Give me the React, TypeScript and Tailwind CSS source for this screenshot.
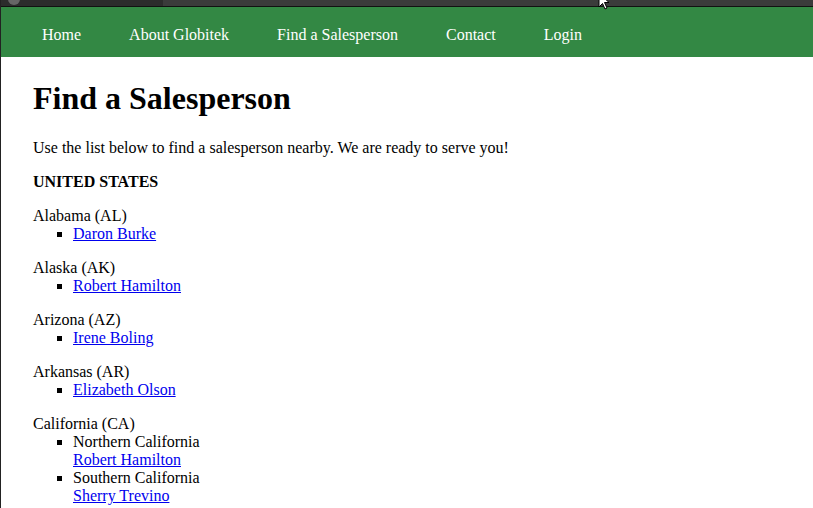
const navItems = ['Home', 'About Globitek', 'Find a Salesperson', 'Contact', 'Login'];

type Region = {
  name: string;
  people?: string[];
  areas?: { area: string; person: string }[];
};

const regions: Region[] = [
  { name: 'Alabama (AL)', people: ['Daron Burke'] },
  { name: 'Alaska (AK)', people: ['Robert Hamilton'] },
  { name: 'Arizona (AZ)', people: ['Irene Boling'] },
  { name: 'Arkansas (AR)', people: ['Elizabeth Olson'] },
  {
    name: 'California (CA)',
    areas: [
      { area: 'Northern California', person: 'Robert Hamilton' },
      { area: 'Southern California', person: 'Sherry Trevino' },
    ],
  },
];

function Link({ children }: { children: string }) {
  return (
    <a href="#" className="text-[#0000ee] underline">
      {children}
    </a>
  );
}

export default function App() {
  return (
    <div className="relative w-[813px] h-[508px] overflow-hidden bg-white border-l border-[#222] font-['Liberation_Serif',serif] text-[16px] leading-[18px] text-black">
      {/* browser chrome strip */}
      <div className="relative flex h-[7px] bg-[#2c2c2c] border-b border-[#111]">
        <div className="absolute left-[7px] top-[-7px] w-[12px] h-[12px] rounded-full bg-[#666]" />
        <div className="ml-[162px] flex-1 bg-[#3b3b3b]" />
      </div>
      <svg className="absolute left-[597px] top-[-8px]" width="12" height="18" viewBox="0 0 12 18">
        <path d="M1 1 L1 15 L4.5 11.5 L7 17 L9 16 L6.5 10.5 L11 10.5 Z" fill="#fff" stroke="#000" strokeWidth="1" />
      </svg>

      <nav className="flex items-center h-[50px] bg-[#338844] pl-[17px] pt-[6px]">
        {navItems.map((item) => (
          <a key={item} href="#" className="px-[24px] text-white">
            {item}
          </a>
        ))}
      </nav>

      <main className="px-[32px] pt-[2px]">
        <h1 className="text-[32px] leading-[37px] font-bold mt-[21px] mb-[22px]">Find a Salesperson</h1>
        <p className="my-[16px]">Use the list below to find a salesperson nearby. We are ready to serve you!</p>
        <h4 className="font-bold my-[16px]">UNITED STATES</h4>
        {regions.map((r) => (
          <div key={r.name} className="mb-[16px]">
            <div>{r.name}</div>
            <ul className="list-[square] pl-[40px]">
              {r.people?.map((p) => (
                <li key={p}>
                  <Link>{p}</Link>
                </li>
              ))}
              {r.areas?.map((a) => (
                <li key={a.area}>
                  {a.area}
                  <br />
                  <Link>{a.person}</Link>
                </li>
              ))}
            </ul>
          </div>
        ))}
      </main>
    </div>
  );
}
